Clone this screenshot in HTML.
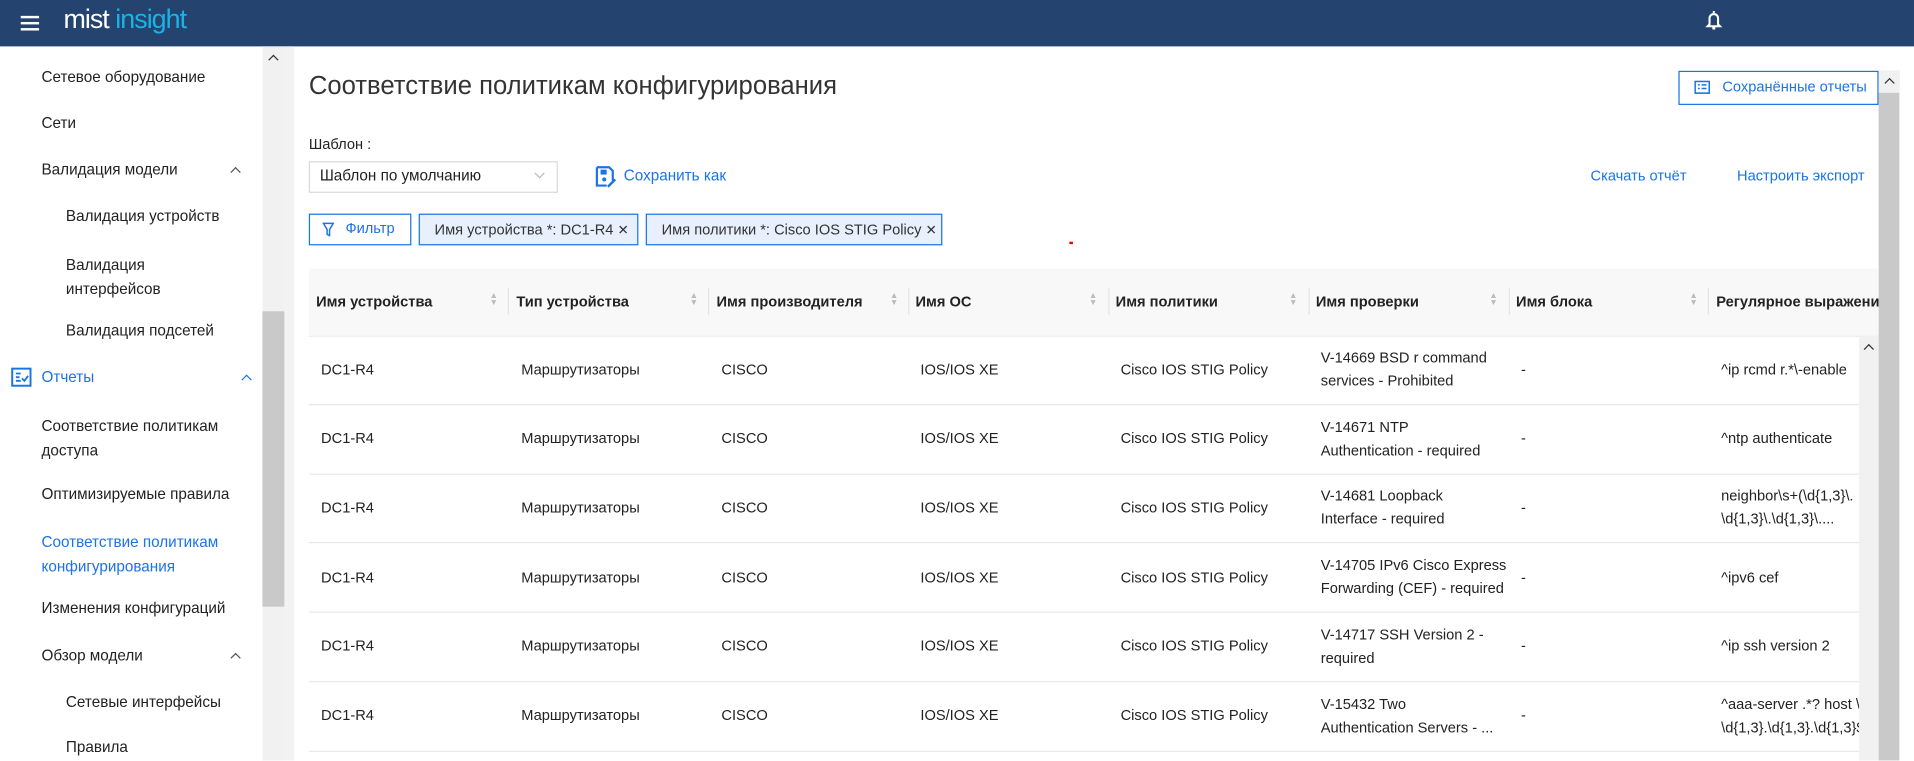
<!DOCTYPE html>
<html><head><meta charset="utf-8"><style>
*{box-sizing:border-box;margin:0;padding:0}
html,body{width:1914px;height:761px;overflow:hidden;background:#fff}
body{font-family:"Liberation Sans","Noto Sans CJK SC",sans-serif;color:#222}
#w{position:absolute;left:0;top:0;width:1568px;height:623px;transform:scale(1.22066);transform-origin:0 0;overflow:hidden}
.a{position:absolute;white-space:nowrap}
.hdr{left:0;top:0;width:1568px;height:38px;background:#25436f}
.sb{font-size:12.5px;color:#222}
.blue{color:#1a73e8}
.th{font-size:12px;font-weight:bold;color:#222}
.td{font-size:12px;color:#222;line-height:19px}
.sep{width:1px;height:22px;background:#e4e4e4;top:236px}
.sort{font-size:7px;color:#bbb;line-height:6px;top:240px}
.row{left:253px;width:1270px;height:1px;background:#e8e8e8}
.chev{position:absolute;width:6px;height:6px;border-left:1.3px solid #555;border-top:1.3px solid #555;transform:rotate(45deg)}
</style></head><body><div id="w">
<div class="a hdr"></div>
<div class="a" style="left:17px;top:13px;width:15px;height:2px;background:#fff;box-shadow:0 5px 0 #fff,0 10px 0 #fff"></div>
<div class="a" style="left:52px;top:3px;font-size:22px;color:#fff;letter-spacing:-0.8px">mist <span style="color:#1ab3e6">insight</span></div>
<svg class="a" style="left:1396px;top:7px" width="16" height="18" viewBox="0 0 16 18"><path d="M8 2v1.5M4.5 13V8a3.5 3.5 0 0 1 7 0v5l1.5 1.5h-10z" fill="none" stroke="#fff" stroke-width="1.7"/><circle cx="8" cy="16" r="1.3" fill="#fff"/></svg>
<!-- sidebar -->
<div class="a" style="left:215px;top:38px;width:18px;height:585px;background:#f1f1f1"></div>
<div class="a" style="left:215px;top:255px;width:18px;height:242px;background:#c9c9c9"></div>
<div class="chev" style="left:221px;top:46px;border-color:#333"></div>
<div class="a" style="left:233px;top:38px;width:8px;height:585px;background:#f3f3f3"></div>
<div class="a sb" style="left:34px;top:56px">Сетевое оборудование</div>
<div class="a sb" style="left:34px;top:94px">Сети</div>
<div class="a sb" style="left:34px;top:132px">Валидация модели</div>
<div class="chev" style="left:190px;top:138px"></div>
<div class="a sb" style="left:54px;top:170px">Валидация устройств</div>
<div class="a sb" style="left:54px;top:207px;line-height:20px;white-space:normal;width:120px">Валидация<br>интерфейсов</div>
<div class="a sb" style="left:54px;top:264px">Валидация подсетей</div>
<svg class="a" style="left:9px;top:301px" width="17" height="16" viewBox="0 0 17 16"><rect x="1" y="1" width="15" height="14" fill="none" stroke="#1a73e8" stroke-width="1.6"/><path d="M4 5h4M4 8h3M4 11h4M9 9l2 2 3-4" fill="none" stroke="#1a73e8" stroke-width="1.5"/></svg>
<div class="a sb blue" style="left:34px;top:302px">Отчеты</div>
<div class="chev" style="left:199px;top:308px;border-color:#1a73e8"></div>
<div class="a sb" style="left:34px;top:339px;line-height:20px">Соответствие политикам<br>доступа</div>
<div class="a sb" style="left:34px;top:398px">Оптимизируемые правила</div>
<div class="a sb blue" style="left:34px;top:434px;line-height:20px">Соответствие политикам<br>конфигурирования</div>
<div class="a sb" style="left:34px;top:491px">Изменения конфигураций</div>
<div class="a sb" style="left:34px;top:530px">Обзор модели</div>
<div class="chev" style="left:190px;top:536px"></div>
<div class="a sb" style="left:54px;top:568px">Сетевые интерфейсы</div>
<div class="a sb" style="left:54px;top:605px">Правила</div>
<!-- main -->
<div class="a" style="left:253px;top:59px;font-size:21px;color:#333">Соответствие политикам конфигурирования</div>
<div class="a" style="left:1375px;top:58px;width:164px;height:28px;border:1px solid #1a73e8;background:#fff"></div>
<svg class="a" style="left:1388px;top:66px" width="13" height="11" viewBox="0 0 13 11"><rect x="0.7" y="0.7" width="11.6" height="9.6" fill="none" stroke="#1a73e8" stroke-width="1.3"/><path d="M3 3.5h1.5M3 6.5h1.5M6 3.5h4M6 6.5h4" stroke="#1a73e8" stroke-width="1.2"/></svg>
<div class="a blue" style="left:1411px;top:64px;font-size:12px">Сохранённые отчеты</div>
<div class="a" style="left:1539px;top:58px;width:17px;height:565px;background:#c9c9c9"></div>
<div class="a" style="left:1539px;top:58px;width:17px;height:18px;background:#f1f1f1"></div>
<div class="chev" style="left:1545px;top:65px;border-color:#333"></div>
<div class="a" style="left:253px;top:111px;font-size:12px;color:#222">Шаблон :</div>
<div class="a" style="left:253px;top:132px;width:204px;height:26px;border:1px solid #d9d9d9"></div>
<div class="a" style="left:262px;top:137px;font-size:12.5px">Шаблон по умолчанию</div>
<div class="a" style="left:439px;top:139px;width:6px;height:6px;border-right:1px solid #bbb;border-bottom:1px solid #bbb;transform:rotate(45deg)"></div>
<svg class="a" style="left:487px;top:136px" width="19" height="18" viewBox="0 0 19 18"><path d="M2 1h10l3 3v8M2 1v15h8" fill="none" stroke="#1a73e8" stroke-width="1.8"/><rect x="5" y="3" width="5" height="4" fill="#1a73e8"/><circle cx="8" cy="11" r="1.7" fill="#1a73e8"/><path d="M11 17l6-6" stroke="#1a73e8" stroke-width="2"/></svg>
<div class="a blue" style="left:511px;top:137px;font-size:12.5px">Сохранить как</div>
<div class="a blue" style="left:1303px;top:137px;font-size:12px">Скачать отчёт</div>
<div class="a blue" style="left:1423px;top:137px;font-size:12px">Настроить экспорт</div>
<div class="a" style="left:253px;top:175px;width:84px;height:26px;border:1px solid #1a73e8"></div>
<svg class="a" style="left:264px;top:182px" width="10" height="12" viewBox="0 0 10 12"><path d="M1 1h8L6 6v5L4 10V6z" fill="none" stroke="#1a73e8" stroke-width="1.2"/></svg>
<div class="a blue" style="left:283px;top:180px;font-size:12px">Фильтр</div>
<div class="a" style="left:343px;top:175px;width:180px;height:26px;border:1px solid #1a73e8;background:#e7f0fc"></div>
<div class="a" style="left:356px;top:181px;font-size:12px;color:#333">Имя устройства *: DC1-R4 <span style="font-size:11px">✕</span></div>
<div class="a" style="left:529px;top:175px;width:243px;height:26px;border:1px solid #1a73e8;background:#e7f0fc"></div>
<div class="a" style="left:542px;top:181px;font-size:12px;color:#333">Имя политики *: Cisco IOS STIG Policy <span style="font-size:11px">✕</span></div>
<div class="a" style="left:876px;top:198px;width:3px;height:2px;background:#f00"></div>
<!-- table -->
<div class="a" style="left:253px;top:220px;width:1286px;height:56px;background:#f8f8f8;border-bottom:1px solid #eee"></div>
<div class="a th" style="left:259px;top:240px">Имя устройства</div>
<div class="a th" style="left:423px;top:240px">Тип устройства</div>
<div class="a th" style="left:587px;top:240px">Имя производителя</div>
<div class="a th" style="left:750px;top:240px">Имя ОС</div>
<div class="a th" style="left:914px;top:240px">Имя политики</div>
<div class="a th" style="left:1078px;top:240px">Имя проверки</div>
<div class="a th" style="left:1242px;top:240px">Имя блока</div>
<div class="a th" style="left:1406px;top:240px;width:133px;overflow:hidden">Регулярное выражение</div>
<div class="a sep" style="left:416px"></div><div class="a sep" style="left:580px"></div><div class="a sep" style="left:744px"></div><div class="a sep" style="left:908px"></div><div class="a sep" style="left:1072px"></div><div class="a sep" style="left:1236px"></div><div class="a sep" style="left:1399px"></div>
<div class="a sort" style="left:401px">▲<br>▼</div><div class="a sort" style="left:565px">▲<br>▼</div><div class="a sort" style="left:729px">▲<br>▼</div><div class="a sort" style="left:892px">▲<br>▼</div><div class="a sort" style="left:1056px">▲<br>▼</div><div class="a sort" style="left:1220px">▲<br>▼</div><div class="a sort" style="left:1384px">▲<br>▼</div>
<div class="a" style="left:1523px;top:276px;width:16px;height:347px;background:#f1f1f1"></div>
<div class="chev" style="left:1528px;top:283px;border-color:#333"></div>

<div id="rows"></div>
<script>
var checks=[["V-14669 BSD r command","services - Prohibited"],["V-14671 NTP","Authentication - required"],["V-14681 Loopback","Interface - required"],["V-14705 IPv6 Cisco Express","Forwarding (CEF) - required"],["V-14717 SSH Version 2 -","required"],["V-15432 Two","Authentication Servers - ..."]];
var rx=[["^ip rcmd r.*\\-enable"],["^ntp authenticate"],["neighbor\\s+(\\d{1,3}\\.","\\d{1,3}\\.\\d{1,3}\\...."],["^ipv6 cef"],["^ip ssh version 2"],["^aaa-server .*? host \\d","\\d{1,3}.\\d{1,3}.\\d{1,3}$"]];
var h="";
for(var i=0;i<6;i++){var c=303+i*56.7;var t=Math.round(c-9.5);
function cell(x,s){return '<div class="a td" style="left:'+x+'px;top:'+t+'px">'+s+'</div>';}
h+=cell(263,"DC1-R4")+cell(427,"Маршрутизаторы")+cell(591,"CISCO")+cell(754,"IOS/IOS XE")+cell(918,"Cisco IOS STIG Policy")+cell(1246,"-");
h+='<div class="a td" style="left:1082px;top:'+Math.round(c-19)+'px">'+checks[i][0]+'<br>'+checks[i][1]+'</div>';
var r=rx[i];var esc=function(s){return s.replace(/&/g,"&amp;").replace(/</g,"&lt;");};
h+='<div class="a td" style="left:1410px;width:113px;overflow:hidden;top:'+(r.length>1?Math.round(c-19):t)+'px">'+r.map(esc).join('<br>')+'</div>';
h+='<div class="a row" style="top:'+Math.round(c+28)+'px"></div>';}
document.getElementById("rows").innerHTML=h;
</script>
</div></body></html>
